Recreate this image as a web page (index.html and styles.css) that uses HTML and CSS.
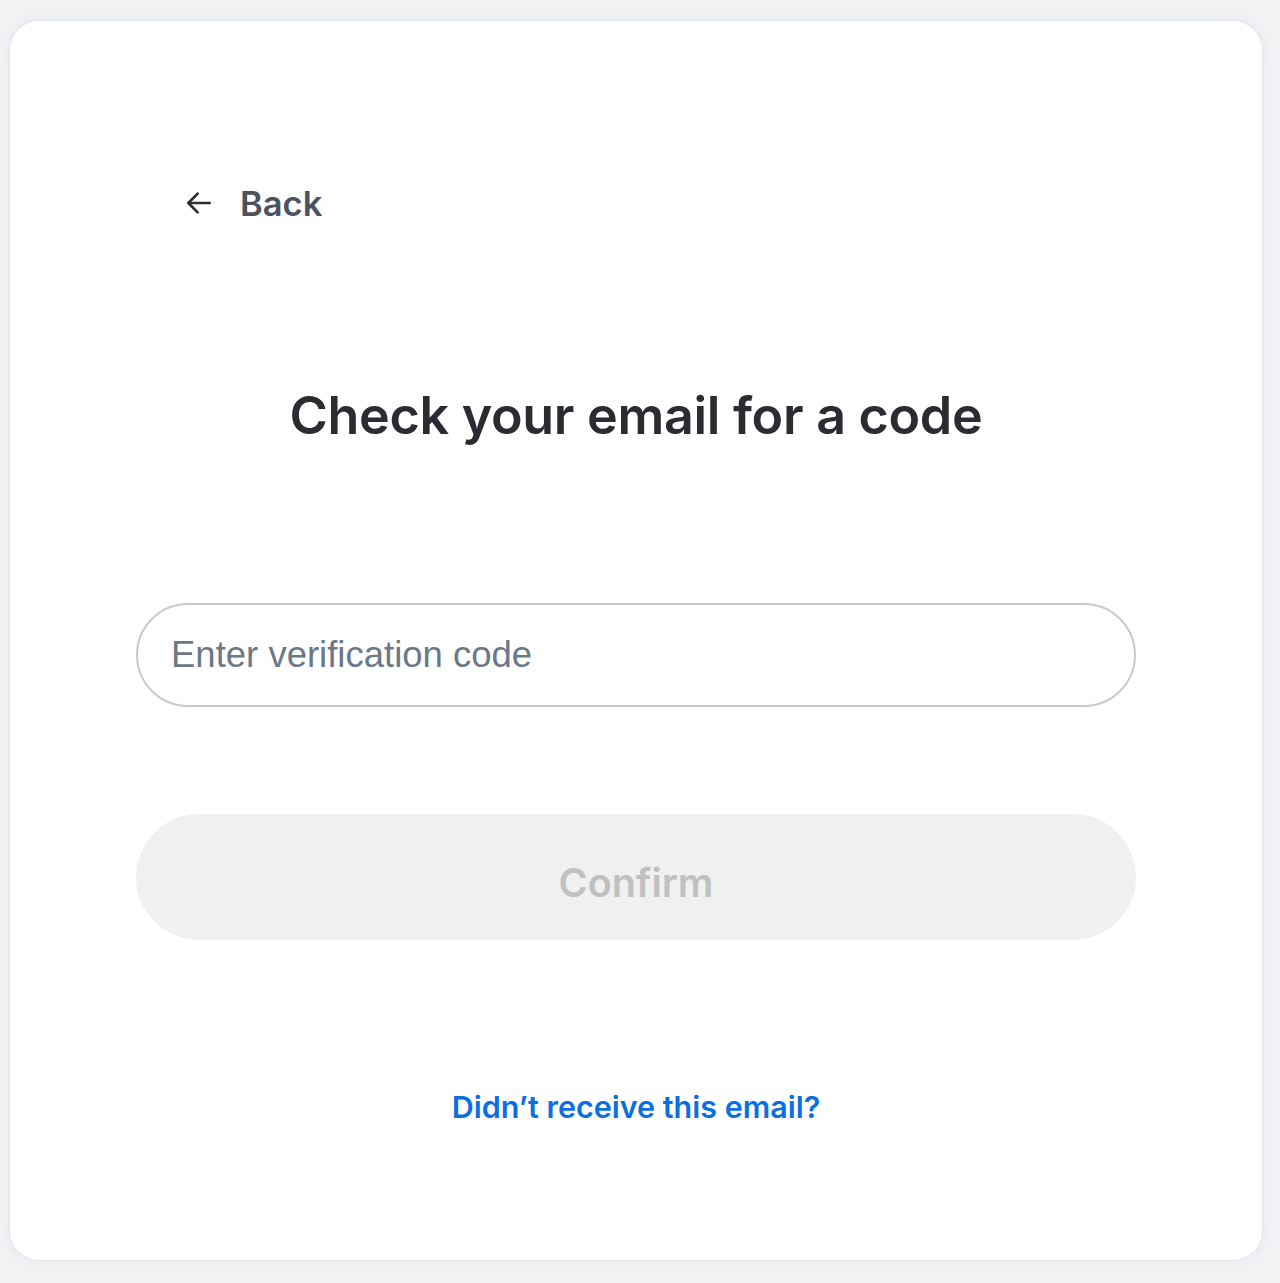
FILE: index.html
```html
<!DOCTYPE html>
<html lang="en">
<head>
<meta charset="utf-8">
<title>Check your email</title>
<link rel="stylesheet" href="styles.css">
</head>
<body>
<main class="card">
  <div class="content">
    <a class="back" href="#">
      <svg class="back-icon" width="32" height="32" viewBox="0 0 24 24" fill="none" stroke="#2b2f36" stroke-width="2" stroke-linecap="round" stroke-linejoin="round"><path d="M20 12H4.5"/><path d="M11 5l-7 7 7 7"/></svg>
      <span>Back</span>
    </a>
    <h1 class="title">Check your email for a code</h1>
    <input class="code-input" type="text" placeholder="Enter verification code">
    <button class="confirm" disabled>Confirm</button>
    <a class="resend" href="#">Didn’t receive this email?</a>
  </div>
</main>
</body>
</html>
```
FILE: styles.css
```css
html, body {
  margin: 0;
  padding: 0;
  background: #f1f2f4;
}
body {
  padding: 20px 17px 22px 9px;
  font-family: Inter, "Noto Sans", sans-serif;
}
.card {
  box-sizing: border-box;
  height: 1241px;
  background: #ffffff;
  border: 1px solid #e4e6ee;
  border-radius: 30px;
  box-shadow: 0 0 12px rgba(210, 214, 228, 0.35);
  display: flex;
  justify-content: center;
}
.content {
  width: 1000px;
  display: flex;
  flex-direction: column;
  align-items: stretch;
  padding-top: 164px;
}
.back {
  display: flex;
  align-items: center;
  gap: 25px;
  margin-left: 47px;
  text-decoration: none;
  color: #4b5361;
  font-size: 34.5px;
  font-weight: 600;
  height: 36px;
  width: max-content;
}
.back-icon {
  display: block;
}
.title {
  margin: 165px 0 0;
  text-align: center;
  font-size: 52px;
  font-weight: 600;
  color: #2a2c31;
  line-height: 60px;
  letter-spacing: -0.3px;
}
.code-input {
  box-sizing: border-box;
  margin-top: 157px;
  height: 104px;
  width: 100%;
  border: 2px solid #c9c9c9;
  border-radius: 52px;
  padding: 0 33px;
  font-family: "Liberation Sans", Arial, sans-serif;
  font-size: 36.5px;
  color: #333;
  background: #fff;
  outline: none;
}
.code-input::placeholder {
  color: #6b7888;
}
.confirm {
  margin-top: 107px;
  height: 126px;
  width: 100%;
  border: none;
  border-radius: 63px;
  background: #eff0f0;
  color: #bfc1c1;
  font-family: Inter, "Noto Sans", sans-serif;
  font-size: 39.5px;
  font-weight: 600;
  padding: 12px 0 0;
}
.resend {
  margin-top: 149px;
  align-self: center;
  text-decoration: none;
  color: #0b6fe0;
  font-size: 30.5px;
  font-weight: 600;
  line-height: 36px;
}
```
